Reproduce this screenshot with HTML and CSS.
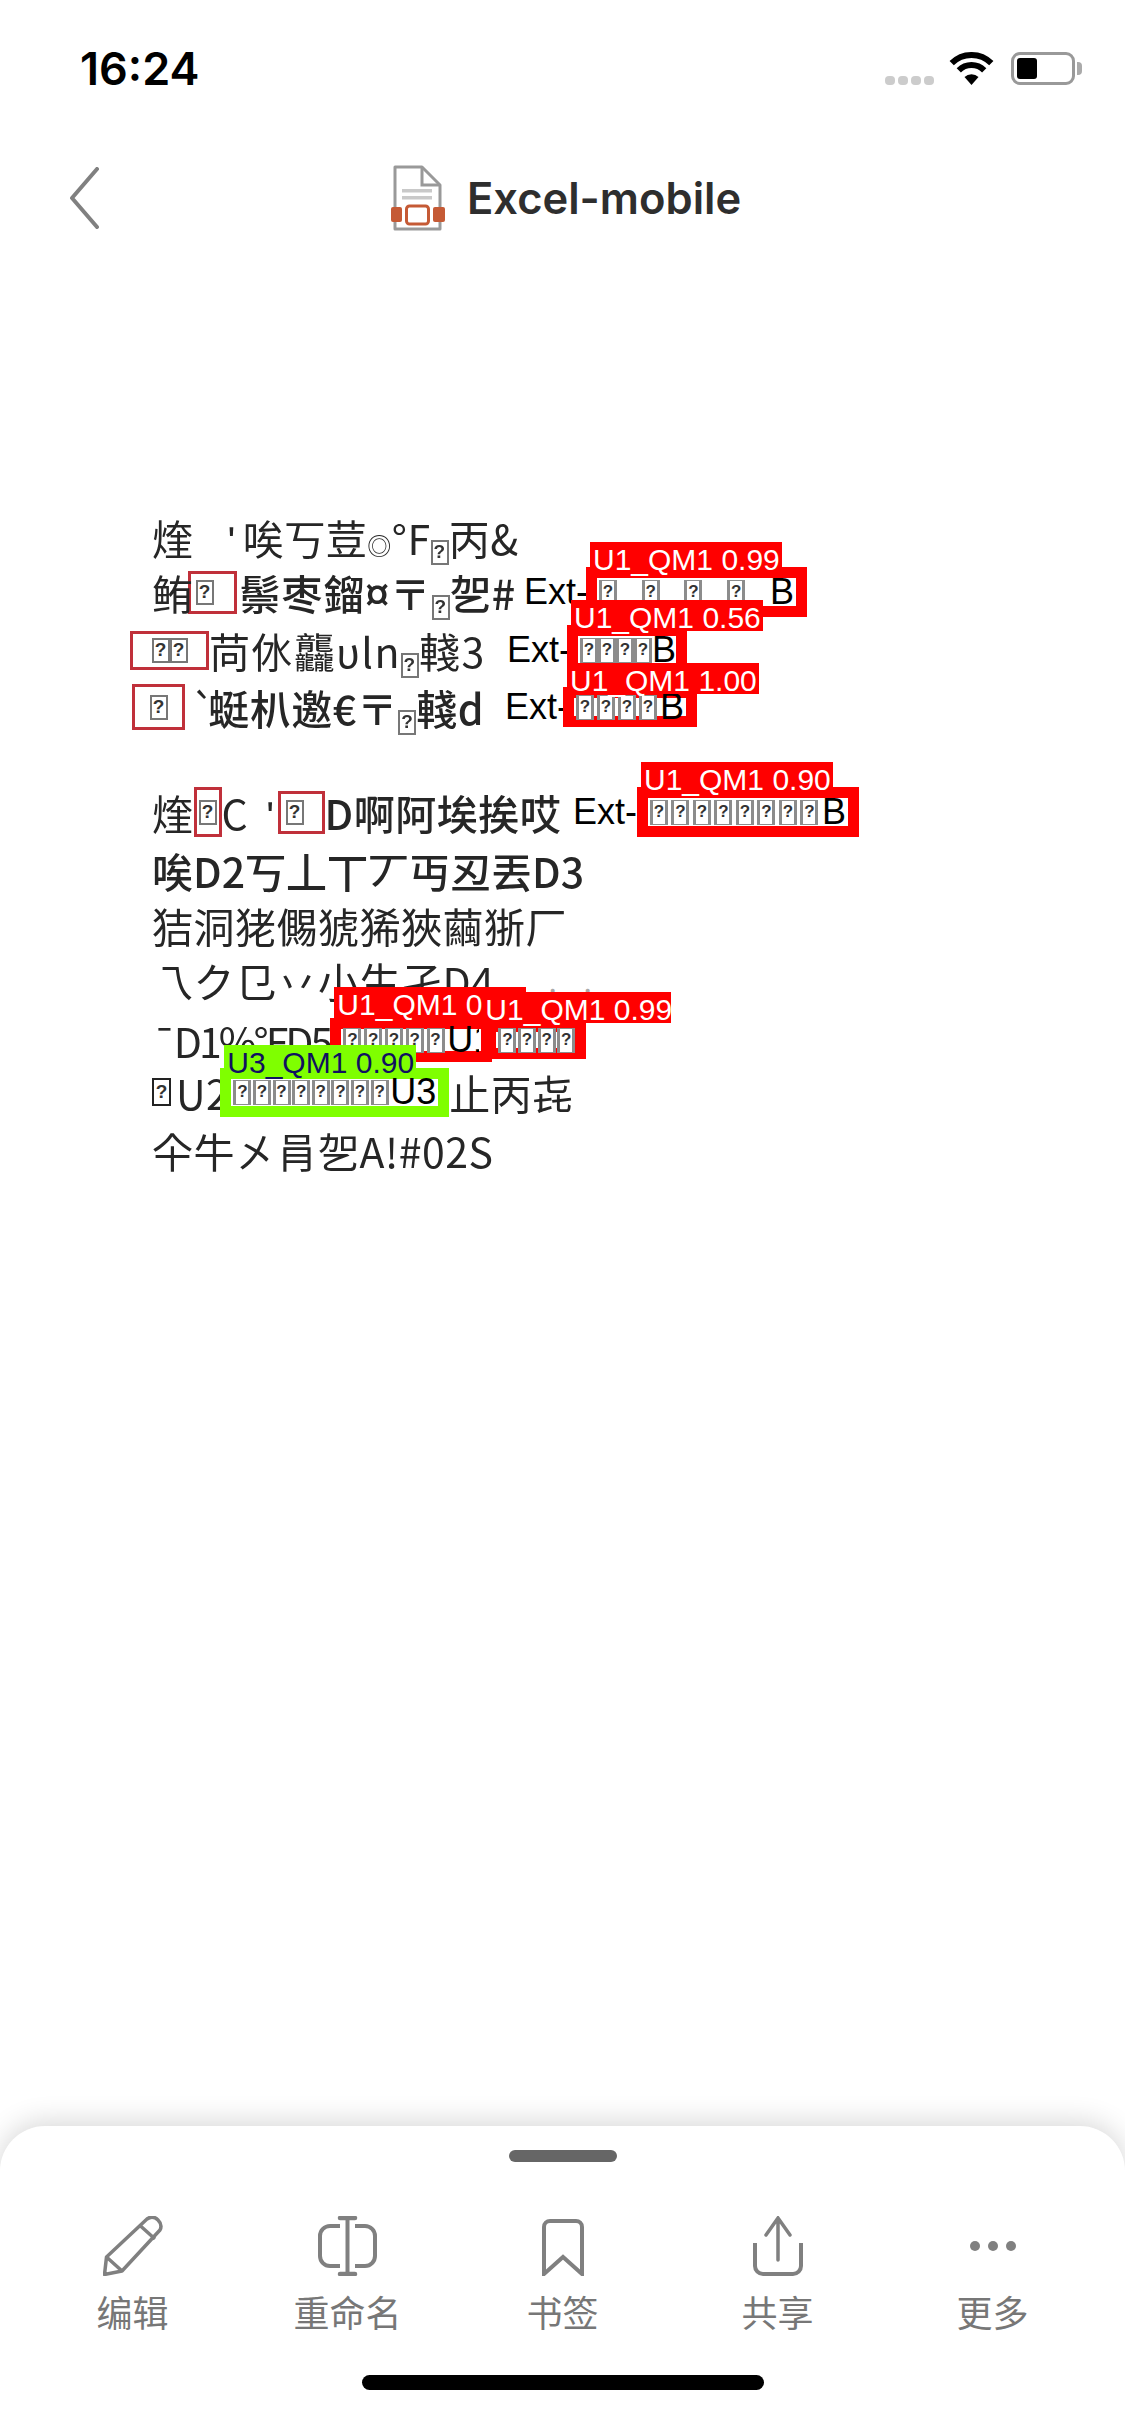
FILE: index.html
```html
<!DOCTYPE html>
<html lang="zh">
  <head>
    <meta charset="UTF-8" />
    <meta name="viewport" content="width=device-width, initial-scale=1" />
    <title>Excel-mobile</title>
    <link rel="stylesheet" href="styles.css">
  </head>
  <body>
    <div class="screen">
      <div class="status-bar">
        <div class="time">16:24</div>
        <div class="status-icons">
          <div class="signal"><i></i><i></i><i></i><i></i></div>
          <svg class="wifi" width="45" height="33" viewBox="0 0 45 33">
            <path d="M2.7 11.2A28 28 0 0 1 42.3 11.2" fill="none" stroke="#000" stroke-width="6" />
            <path d="M9.8 18.3A18 18 0 0 1 35.2 18.3" fill="none" stroke="#000" stroke-width="6" />
            <path d="M22.5 33L15.5 25A10 10 0 0 1 29.5 25Z" fill="#000" />
          </svg>
          <div class="battery"><div class="battery-fill"></div></div>
          <div class="battery-knob"></div>
        </div>
      </div>

      <div class="nav-bar">
        <svg class="back" width="31" height="62" viewBox="0 0 31 62">
          <path d="M28 2L3 31L28 60" fill="none" stroke="#808080" stroke-width="4" stroke-linecap="round" stroke-linejoin="round" />
        </svg>
        <svg class="file-icon" width="54" height="66" viewBox="0 0 54 66">
          <path d="M4 64V2H31L49 20V64Z" fill="#fff" stroke="#999" stroke-width="3" stroke-linejoin="round" />
          <path d="M31 2V20H49" fill="none" stroke="#999" stroke-width="3" />
          <rect x="11" y="24" width="30" height="3.5" fill="#c9c9c9" />
          <rect x="11" y="31" width="30" height="3.5" fill="#c9c9c9" />
          <rect x="0" y="42" width="11" height="15" rx="2" fill="#c55a35" />
          <rect x="42" y="42" width="12" height="15" rx="2" fill="#c55a35" />
          <rect x="15.5" y="41" width="22" height="18" rx="3" fill="#fff" stroke="#c55a35" stroke-width="3" />
        </svg>
        <div class="title">Excel-mobile</div>
      </div>

      <div class="doc">
        <div class="line l1">
          <span class="scan">煃</span>
          <span class="scan prime">ʹ</span>
          <span class="scan">唉丂荳<span class="small-glyph">◎</span>°F<b class="tofu"></b>丙&amp;</span>
        </div>

        <div class="line l2">
          <div class="src">
            <span class="scan">鲔</span>
            <span class="mark mark-start mark-first"><b class="tofu"></b></span>
            <span class="scan heavy">鬃枣鎦¤〒<b class="tofu"></b>乫#</span>
          </div>
          <span class="ext">Ext-</span>
          <div class="hit">
            <div class="hit-label">U1_QM1 0.99</div>
            <b class="tofu"></b><b class="tofu"></b><b class="tofu"></b><b class="tofu"></b><span class="hit-end">B</span>
          </div>
        </div>

        <div class="line l3">
          <div class="src">
            <span class="mark mark-wide"><b class="tofu"></b><b class="tofu"></b></span>
            <span class="scan">苘㲻龘υln<b class="tofu"></b>輚3</span>
          </div>
          <span class="ext">Ext-</span>
          <div class="hit">
            <div class="hit-label">U1_QM1 0.56</div>
            <b class="tofu"></b><b class="tofu"></b><b class="tofu"></b><b class="tofu"></b><span class="hit-end">B</span>
          </div>
        </div>

        <div class="line l4">
          <div class="src">
            <span class="mark mark-tall"><b class="tofu"></b></span>
            <span class="scan tick">`</span>
            <span class="scan heavy">蜓朳邀€〒<b class="tofu"></b>輚d</span>
          </div>
          <span class="ext">Ext-</span>
          <div class="hit">
            <div class="hit-label">U1_QM1 1.00</div>
            <b class="tofu"></b><b class="tofu"></b><b class="tofu"></b><b class="tofu"></b><span class="hit-end">B</span>
          </div>
        </div>

        <div class="line l5">
          <div class="src">
            <span class="scan">煃</span>
            <span class="mark mark-thin"><b class="tofu"></b></span>
            <span class="scan">C</span>
            <span class="scan prime">ʹ</span>
            <span class="mark mark-start mark-second"><b class="tofu"></b></span>
            <span class="scan heavy">D啊阿埃挨哎</span>
          </div>
          <span class="ext">Ext-</span>
          <div class="hit">
            <div class="hit-label">U1_QM1 0.90</div>
            <b class="tofu"></b><b class="tofu"></b><b class="tofu"></b><b class="tofu"></b><b class="tofu"></b><b class="tofu"></b><b class="tofu"></b><b class="tofu"></b><span class="hit-end">B</span>
          </div>
        </div>

        <div class="line l6"><span class="scan heavy">唉D2丂丄丅丆丏丒丟D3</span></div>
        <div class="line l7"><span class="scan">狤洞狫儩猇狶狹繭狾厂</span></div>
        <div class="line l8">
          <span class="scan">乁ク㔾丷小生孑D4</span>
          <span class="specks">. .</span>
        </div>

        <div class="line l9">
          <span class="scan">¯D1%°FD5</span>
          <div class="hit">
            <div class="hit-label">U1_QM1 0.99</div>
            <b class="tofu"></b><b class="tofu"></b><b class="tofu"></b><b class="tofu"></b><b class="tofu"></b><span class="hit-end">U1</span>
          </div>
          <div class="hit hit-next">
            <div class="hit-label">U1_QM1 0.99</div>
            <b class="tofu"></b><b class="tofu"></b><b class="tofu"></b><b class="tofu"></b>
          </div>
        </div>

        <div class="line l10">
          <b class="tofu tofu-dark"></b>
          <span class="scan">U2</span>
          <div class="hit hit-green">
            <div class="hit-label">U3_QM1 0.90</div>
            <b class="tofu"></b><b class="tofu"></b><b class="tofu"></b><b class="tofu"></b><b class="tofu"></b><b class="tofu"></b><b class="tofu"></b><b class="tofu"></b><span class="hit-end">U3</span>
          </div>
          <span class="scan">止丙㐂</span>
        </div>

        <div class="line l11"><span class="scan">仐牛㐅肙乫A!#02S</span></div>
      </div>

      <div class="sheet">
        <div class="handle"></div>
        <div class="actions">
          <div class="action">
            <svg width="60" height="60" viewBox="0 0 60 60">
              <path d="M1.5 58.5L3.5 41L44 3C48 0 52 1 55 4S59 10 57 14L19 55ZM3.5 41L19 55M37 9.500L52 23" fill="none" stroke="#808080" stroke-width="3.500" stroke-linejoin="round" />
            </svg>
            <span>编辑</span>
          </div>
          <div class="action">
            <svg width="59" height="60" viewBox="0 0 59 60">
              <path d="M22 10H12A10 10 0 0 0 2 20V40A10 10 0 0 0 12 50H22M37 10H47A10 10 0 0 1 57 20V40A10 10 0 0 1 47 50H37" fill="none" stroke="#808080" stroke-width="4" />
              <path d="M29.500 2V58" fill="none" stroke="#808080" stroke-width="4" />
              <path d="M22 2H37M22 58H37" fill="none" stroke="#808080" stroke-width="4.500" stroke-linecap="round" />
            </svg>
            <span>重命名</span>
          </div>
          <div class="action">
            <svg width="42" height="60" viewBox="0 0 42 60">
              <path d="M2 58V11A6 6 0 0 1 8 5H34A6 6 0 0 1 40 11V58L21 41Z" fill="none" stroke="#808080" stroke-width="4" stroke-linejoin="miter" />
            </svg>
            <span>书签</span>
          </div>
          <div class="action">
            <svg width="52" height="60" viewBox="0 0 52 60">
              <path d="M3 27V50A8 8 0 0 0 11 58H41A8 8 0 0 0 49 50V27" fill="none" stroke="#808080" stroke-width="4" />
              <path d="M26 3V44M14 19L26 2L38 19" fill="none" stroke="#808080" stroke-width="3.500" stroke-linecap="round" />
            </svg>
            <span>共享</span>
          </div>
          <div class="action">
            <svg width="46" height="60" viewBox="0 0 46 60">
              <circle cx="5" cy="30" r="5" fill="#808080" />
              <circle cx="23" cy="30" r="5" fill="#808080" />
              <circle cx="41" cy="30" r="5" fill="#808080" />
            </svg>
            <span>更多</span>
          </div>
        </div>
        <div class="home-bar"></div>
      </div>
    </div>
  </body>
</html>
```

FILE: styles.css
```css
body {
  margin: 0;
  padding: 0;
  background: #fff;
  font-family: "Liberation Sans", Arial, sans-serif;
}
.screen {
  width: 1125px;
  height: 2436px;
  display: flex;
  flex-direction: column;
  overflow: hidden;
}

/* status bar */
.status-bar {
  height: 130px;
  box-sizing: border-box;
  padding: 52px 43px 0 80px;
  display: flex;
  justify-content: space-between;
  align-items: flex-start;
}
.time {
  font-family: Inter, "Liberation Sans", sans-serif;
  font-size: 45px;
  font-weight: 600;
  line-height: 34px;
  color: #000;
}
.status-icons {
  display: flex;
  align-items: flex-start;
}
.signal {
  display: flex;
  gap: 3px;
  margin-top: 24px;
  margin-right: 15px;
}
.signal i {
  width: 10px;
  height: 9px;
  border-radius: 4px;
  background: #ccc;
}
.battery {
  width: 64px;
  height: 33px;
  box-sizing: border-box;
  border: 3px solid #999;
  border-radius: 9px;
  padding: 3px;
  margin-left: 17px;
}
.battery-fill {
  width: 20px;
  height: 100%;
  background: #000;
  border-radius: 3px;
}
.battery-knob {
  width: 5px;
  height: 13px;
  margin: 10px 0 0 2px;
  background: #aaa;
  border-radius: 0 4px 4px 0;
}

/* nav bar */
.nav-bar {
  height: 136px;
  padding-left: 69px;
  display: flex;
  align-items: center;
}
.file-icon {
  margin-left: 291px;
}
.title {
  margin-left: 22px;
  font-family: Inter, "Liberation Sans", sans-serif;
  font-size: 43.500px;
  font-weight: 600;
  color: #2e2e2e;
}

/* document page */
.doc {
  flex: 1;
  padding-top: 243px;
  padding-left: 152px;
  font-family: "Noto Sans CJK SC", "Liberation Sans", sans-serif;
  font-size: 41px;
  color: #262626;
}
.line {
  height: 56px;
  display: flex;
  align-items: center;
  white-space: pre;
}
.src {
  display: flex;
  align-items: center;
  flex: none;
}
.scan {
  filter: blur(0.6px);
  letter-spacing: 0.5px;
}
.heavy {
  font-weight: 500;
}
.prime {
  margin-left: 34px;
  margin-right: 7px;
}
.tick {
  margin-right: -8px;
}
.small-glyph {
  font-size: 24px;
}
.l2 { margin-top: -1px; }
.l3 { margin-top: 2px; margin-left: -22px; }
.l4 { margin-top: 1px; margin-left: -20px; }
.l5 { margin-top: 49px; }
.l6 { margin-top: 2px; }
.l7 { margin-top: -1px; }
.l8 { margin-top: -1px; }
.l9 { margin-top: 4px; }
.l10 { margin-top: -4px; }
.l11 { margin-top: 2px; }
.l2 .src { width: 372px; }
.l3 .src { width: 377px; }
.l4 .src { width: 373px; }
.l5 .src { width: 421px; }
.l2 .heavy { letter-spacing: 1px; }
.l3 .scan { letter-spacing: 1.5px; }
.l5 .prime { margin-left: 18px; margin-right: 3px; }
.l6 .scan { letter-spacing: 0; }
.l9 .scan { letter-spacing: -3px; }

/* missing-glyph boxes */
.tofu {
  display: inline-flex;
  width: 18px;
  height: 25px;
  box-sizing: border-box;
  border: 2px solid #777;
  background: #fff;
  flex: none;
  vertical-align: -3px;
  align-items: center;
  justify-content: center;
  font-family: "Liberation Sans", sans-serif;
  font-size: 19px;
  font-weight: bold;
  color: #333;
}
.tofu::before {
  content: "?";
}
.tofu-dark {
  width: 19px;
  border-color: #222;
  height: 28px;
  margin-right: 5px;
}

/* thin dark red outlines around the glyphs */
.mark {
  display: flex;
  align-items: center;
  justify-content: center;
  flex: none;
  box-sizing: border-box;
  border: 3px solid #c0303a;
  width: 49px;
  height: 43px;
}
.mark-start {
  justify-content: flex-start;
  padding-left: 5px;
}
.mark-first { margin-left: -6px; margin-right: 3px; }
.mark-wide { width: 79px; height: 39px; }
.mark-tall { width: 53px; height: 46px; margin-right: 6px; }
.mark-thin { width: 28px; height: 50px; }
.mark-second { width: 47px; }

.ext {
  width: 62px;
  flex: none;
  font-family: "Liberation Sans", sans-serif;
  font-size: 36px;
  color: #000;
}

/* detection boxes */
.hit {
  position: relative;
  flex: none;
  width: 221px;
  height: 50px;
  box-sizing: border-box;
  border: 11px solid #f00;
  background: #fff;
  display: flex;
  align-items: center;
  justify-content: space-between;
  padding: 0 2px;
}
.hit .tofu {
  border-width: 1px 3px;
  border-color: #8c8c8c;
  font-size: 17px;
}
.hit-label {
  position: absolute;
  left: -7px;
  bottom: calc(100% + 5px);
  width: 192px;
  height: 31px;
  padding: 4px 0 0 3px;
  box-sizing: border-box;
  background: #f00;
  color: #fff;
  font-family: "Liberation Sans", sans-serif;
  font-size: 30px;
  line-height: 27px;
}
.hit-end {
  font-family: "Liberation Sans", sans-serif;
  font-size: 36px;
  line-height: 28px;
  color: #000;
}
.hit-green {
  width: 229px;
  height: 49px;
  margin-left: -9px;
  border-color: #7fff00;
}
.hit-green .hit-label {
  background: #7fff00;
  color: #101060;
  bottom: calc(100% + 3px);
}
.hit-next {
  width: 101px;
  margin-left: -7px;
}
.specks {
  margin-left: 54px;
  color: #aaa;
  font-size: 30px;
  letter-spacing: 10px;
}

/* line by line box sizes */
.l3 .ext { width: 60px; }
.l3 .hit { width: 120px; height: 50px; }
.l4 .ext { width: 58px; }
.l4 .hit { width: 134px; height: 40px; }
.l4 .hit-label { bottom: calc(100% + 4px); }
.l5 .ext { width: 64px; }
.l5 .hit { width: 222px; }
.l9 .hit { width: 162px; height: 44px; }
.l9 .hit-label { bottom: calc(100% + 11px); }
.l9 .hit-end { width: 32px; overflow: hidden; }
.l9 .hit-next { width: 101px; height: 38px; }
.l9 .hit-next .hit-label { left: -14px; width: 189px; bottom: calc(100% + 9px); }
.l9 .hit .tofu { margin-right: -2px; }
.l10 .hit { width: 229px; }

/* bottom sheet */
.sheet {
  height: 310px;
  flex: none;
  box-sizing: border-box;
  padding-top: 24px;
  background: #fff;
  border-radius: 45px 45px 0 0;
  box-shadow: 0 -4px 28px rgba(0, 0, 0, 0.16);
  display: flex;
  flex-direction: column;
  align-items: center;
}
.handle {
  width: 108px;
  height: 12px;
  border-radius: 6px;
  background: #666;
}
.actions {
  margin-top: 54px;
  width: 1075px;
  display: grid;
  grid-template-columns: repeat(5, 1fr);
}
.action {
  display: flex;
  flex-direction: column;
  align-items: center;
  gap: 15px;
  font-family: "Noto Sans CJK SC", sans-serif;
  font-size: 36px;
  line-height: 40px;
  color: #777;
}
.home-bar {
  margin-top: 44px;
  width: 402px;
  height: 15px;
  border-radius: 8px;
  background: #000;
}
```
